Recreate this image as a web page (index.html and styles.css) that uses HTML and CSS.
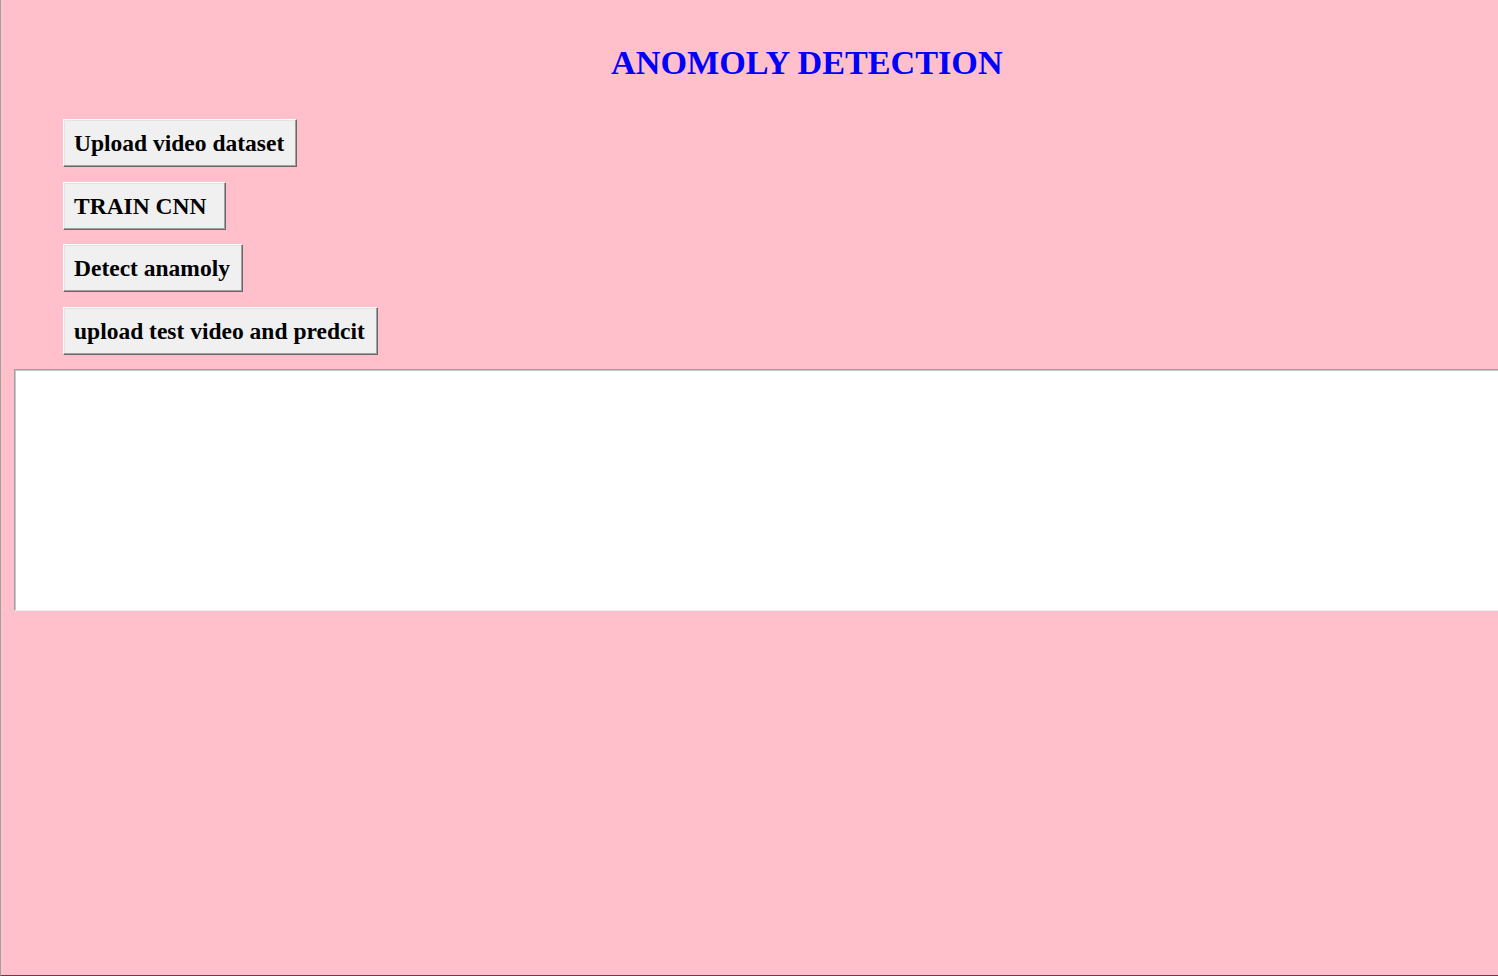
FILE: index.html
```html
<!DOCTYPE html>
<html>
<head>
<meta charset="utf-8">
<title>ANOMOLY DETECTION</title>
<link rel="stylesheet" href="styles.css">
</head>
<body>
<div class="window">
  <h1 class="title">ANOMOLY DETECTION</h1>
  <div class="actions">
    <button class="btn">Upload video dataset</button>
    <button class="btn btn-wide">TRAIN CNN</button>
    <button class="btn">Detect anamoly</button>
    <button class="btn">upload test video and predcit</button>
  </div>
  <textarea class="output"></textarea>
</div>
</body>
</html>
```
FILE: styles.css
```css
html, body {
  margin: 0;
  padding: 0;
  background: #ffc0cb;
}
.window {
  box-sizing: border-box;
  width: 1498px;
  height: 976px;
  background: #ffc0cb;
  border-left: 1px solid #a0a0a0;
  border-bottom: 1px solid #4a4a4a;
  overflow: hidden;
  font-family: "Liberation Serif", "Times New Roman", serif;
}
.title {
  margin: 0;
  padding: 43px 0 0 610px;
  font-size: 34.2px;
  line-height: 40px;
  font-weight: bold;
  color: #0000ff;
  white-space: nowrap;
}
.actions {
  display: flex;
  flex-direction: column;
  align-items: flex-start;
  gap: 14.5px;
  margin: 36px 0 0 62px;
}
.btn {
  box-sizing: border-box;
  height: 48px;
  margin: 0;
  padding: 0 12px 0 10px;
  font-family: "Liberation Serif", "Times New Roman", serif;
  font-size: 23.5px;
  line-height: 28px;
  font-weight: bold;
  color: #000;
  background: #f0f0f0;
  border: 1px solid;
  border-color: #ffffff #696969 #696969 #ffffff;
  box-shadow: inset -1px -1px 0 #a0a0a0, inset 1px 1px 0 #e3e3e3;
  border-radius: 0;
  white-space: nowrap;
  text-align: left;
}
.btn-wide {
  min-width: 163px;
}
.output {
  display: block;
  box-sizing: border-box;
  width: 1520px;
  height: 242px;
  margin: 14px 0 0 13px;
  padding: 0;
  resize: none;
  background: #ffffff;
  border: 1px solid;
  border-color: #a0a0a0 #f0f0f0 #f0f0f0 #a0a0a0;
  box-shadow: inset 1px 1px 0 #c8c8c8;
  outline: none;
}
```
